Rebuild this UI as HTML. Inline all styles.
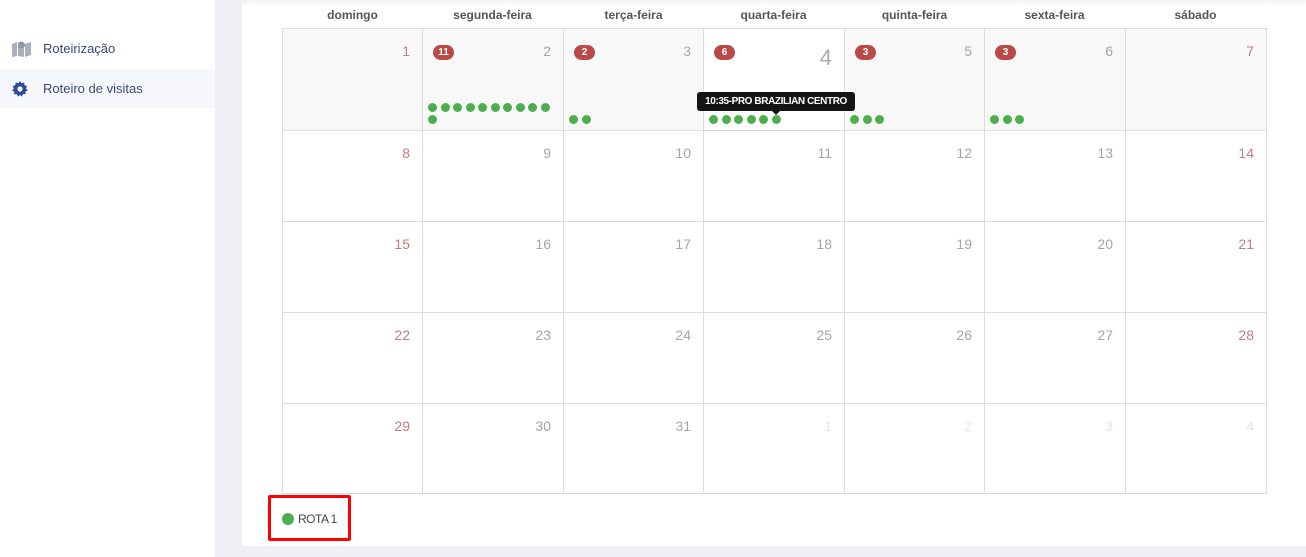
<!DOCTYPE html>
<html><head><meta charset="utf-8"><style>
*{box-sizing:border-box;margin:0;padding:0}
body{width:1306px;height:557px;background:#eef0f5;font-family:"Liberation Sans",sans-serif;position:relative;overflow:hidden}
.side{position:absolute;left:0;top:0;width:215px;height:557px;background:#fff}
.item{position:absolute;left:0;width:215px;height:39px;font-size:13px;color:#3a4a7a;padding-left:43px;line-height:39px}
.card{position:absolute;left:242px;top:0;width:1064px;height:546px;background:#fff}
.hd{position:absolute;top:8px;font-size:12px;font-weight:bold;color:#555;text-align:center;width:141px}
.cell{position:absolute;border-right:1px solid #ddd;border-bottom:1px solid #ddd}
.n{position:absolute;right:12px;top:14px;font-size:14px;color:#a5a5a5}
.r{color:#c47c7c}.o{color:#e5e5e5}
.b{position:absolute;left:10px;top:16px;width:21px;height:15px;border-radius:8px;background:#b94a48;color:#fff;font-size:10px;font-weight:bold;text-align:center;line-height:15px}
.d{position:absolute;width:9px;height:9px;border-radius:50%;background:#4cae4c}
</style></head><body>
<div class="side">
<div class="item" style="top:29px"><svg style="position:absolute;left:12px;top:11px" width="19" height="17" viewBox="0 0 19 17"><path d="M0 4l5-2v14l-5 1z M6 2l6 2v13l-6-1z M13 4l6-2v13l-6 2z" fill="#aab0bd"/><circle cx="9.5" cy="5" r="3.5" fill="#8f96a5"/></svg>Roteirização</div>
<div class="item" style="top:69px;background:#f6f7fa"><svg style="position:absolute;left:12px;top:12px" width="16" height="16" viewBox="0 0 16 16"><path d="M8 0l1.5 2.2 2.6-.7.4 2.7 2.6.9-1.2 2.4 1.9 1.9-2.4 1.2.3 2.7-2.7-.3-1.1 2.5L8 14l-2.1 1.6-1.1-2.5-2.7.3.3-2.7L0 9.5l1.9-1.9L.7 5.1l2.6-.9.4-2.7 2.6.7z" fill="#2f4a9c"/><circle cx="8" cy="8" r="2.6" fill="#fff"/></svg>Roteiro de visitas</div>
</div>
<div class="card"></div>
<div style="position:absolute;left:242px;top:0;width:1064px;height:6px;background:linear-gradient(#f2f2f4,#fff)"></div>
<div id="cal"></div>
<div style="position:absolute;left:268px;top:495px;width:83px;height:46px;border:3px solid #f00;border-radius:2px"></div>
<div style="position:absolute;left:282px;top:513px;width:12px;height:12px;border-radius:50%;background:#4cae4c"></div>
<div style="position:absolute;left:298px;top:512px;font-size:12px;color:#444;letter-spacing:-.5px">ROTA 1</div>
<div style="position:absolute;left:697px;top:92px;width:158px;height:19px;background:#151515;border-radius:3px;color:#fff;font-size:10px;font-weight:bold;text-align:center;line-height:19px;letter-spacing:-.4px;z-index:5">10:35-PRO BRAZILIAN CENTRO</div>
<div style="position:absolute;left:771px;top:110px;border:5px solid transparent;border-top-color:#151515;border-bottom:0;z-index:5"></div>
<script>
var xs=[282,422,563,703,844,984,1125,1266],ys=[28,130,221,312,403,493];
var names=["domingo","segunda-feira","terça-feira","quarta-feira","quinta-feira","sexta-feira","sábado"];
var h="";
for(var c=0;c<7;c++)h+='<div class="hd" style="left:'+xs[c]+'px">'+names[c]+'</div>';
var badge={1:11,2:2,3:6,4:3,5:3},dots={1:11,2:2,3:6,4:3,5:3};
for(var r=0;r<5;r++)for(c=0;c<7;c++){
 var day=r*7+c+1,cls="",txt=day;
 if(day>31){txt=day-31;cls="o"}else if(c==0||c==6)cls="r";
 var bg=(r==0&&c!=3)?"#f8f8f8":"#fff";
 var L=xs[c],T=ys[r],W=xs[c+1]-xs[c]+1,H=ys[r+1]-ys[r]+1;
 var st='border-left:1px solid #ddd;border-top:1px solid #ddd;';
 var sty='left:'+L+'px;top:'+T+'px;width:'+W+'px;height:'+H+'px;background:'+bg+';'+st;
 var inner='<div class="n '+cls+'"'+(r==0&&c==3?' style="font-size:22px;top:16px;color:#aaa"':'')+'>'+txt+'</div>';
 if(r==0&&badge[c]){inner+='<div class="b">'+badge[c]+'</div>';
  for(var k=0;k<dots[c];k++){var row=k>=10?1:0,col=k%10;inner+='<div class="d" style="left:'+(5+col*12.5)+'px;top:'+(row?86:(c==1?74:86))+'px"></div>';}}
 h+='<div class="cell" style="'+sty+'">'+inner+'</div>';
}
document.getElementById("cal").innerHTML=h;
</script>
</body></html>
